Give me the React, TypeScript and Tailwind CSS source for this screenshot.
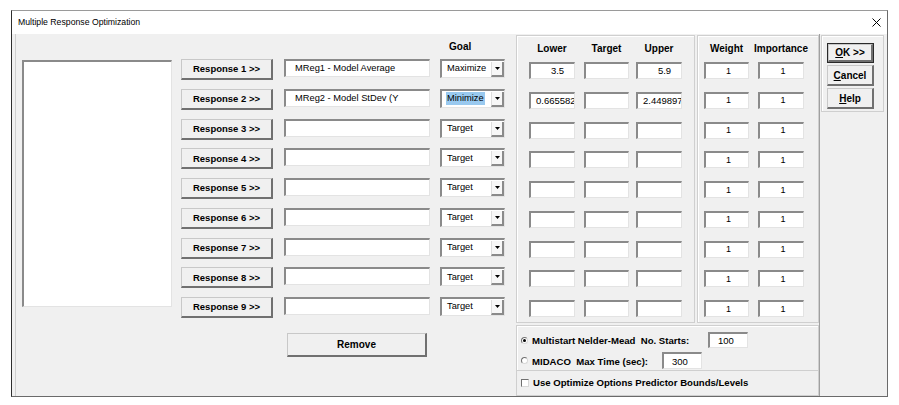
import React from "react";

type Row = { name: string; goal: string; lower: string; target: string; upper: string; selected?: boolean };

const rows: Row[] = [
  { name: "MReg1 - Model Average", goal: "Maximize", lower: "3.5", target: "", upper: "5.9" },
  { name: "MReg2 - Model StDev (Y", goal: "Minimize", lower: "0.665582", target: "", upper: "2.449897", selected: true },
  ...Array.from({ length: 7 }, () => ({ name: "", goal: "Target", lower: "", target: "", upper: "" })),
];

const sunken =
  "bg-white border-t-2 border-l-2 border-t-[#8a8a8a] border-l-[#8a8a8a] border-b border-r border-b-[#e3e3e3] border-r-[#e3e3e3] overflow-hidden whitespace-nowrap";

const raised =
  "flex items-center justify-center bg-[#f0f0f0] border-t border-l border-t-[#c8c8c8] border-l-[#c8c8c8] border-b-2 border-r-2 border-b-[#707070] border-r-[#707070] font-bold whitespace-nowrap";

function NumField({ value }: { value: string }) {
  const long = value.length > 5;
  return (
    <div className={sunken + " w-full h-[17px] flex items-center text-[9.5px] leading-none"}>
      {long ? (
        <span className="pl-[5px]">{value}</span>
      ) : (
        <span className="w-full text-center pl-[10px]">{value}</span>
      )}
    </div>
  );
}

function OneField() {
  return (
    <div className={sunken + " w-full h-[17px] flex items-center justify-center text-[9px] leading-none"}>
      <span className="pl-[3px]">1</span>
    </div>
  );
}

function Combo({ value, selected }: { value: string; selected?: boolean }) {
  return (
    <div className="flex w-[65px] h-[19px] bg-white border-t-2 border-l-2 border-t-[#8a8a8a] border-l-[#8a8a8a] border-b border-r border-b-[#e3e3e3] border-r-[#e3e3e3]">
      <div className="flex-1 flex items-center pl-[5px] text-[9.3px] leading-none">
        <span className={selected ? "bg-[#99c9ef] py-[2px] px-[1px] -ml-[1px]" : ""}>{value}</span>
      </div>
      <div className="w-[13px] mt-[1px] flex items-center justify-center bg-[#f7f7f7] border-l border-l-[#dcdcdc] border-r-2 border-b-2 border-r-[#8a8a8a] border-b-[#8a8a8a]">
        <svg width="5" height="3" viewBox="0 0 5 3">
          <path d="M0 0H5L2.5 3Z" fill="#000" />
        </svg>
      </div>
    </div>
  );
}

function Radio({ checked }: { checked?: boolean }) {
  return (
    <div className="w-[7px] h-[7px] rounded-full bg-white border border-t-[#707070] border-l-[#707070] border-b-[#d8d8d8] border-r-[#d8d8d8] flex items-center justify-center">
      {checked ? <div className="w-[3px] h-[3px] rounded-full bg-black" /> : null}
    </div>
  );
}

const groupBox = "border border-[#cfcfcf] shadow-[inset_1px_1px_0_#ffffff]";

export default function App() {
  return (
    <div className="w-[899px] h-[405px] bg-white pt-[10px] pl-[11px] font-['Liberation_Sans',Arial,sans-serif] text-black">
      <div className="w-[877px] h-[387px] flex flex-col border-l border-l-[#2e2e2e] border-t border-t-[#9a9a9a] border-r border-r-[#6a6a6a] border-b border-b-[#6a6a6a]">
        {/* Title bar */}
        <div className="h-[23px] shrink-0 bg-white flex items-center justify-between pl-[6px] pr-[6px]">
          <span className="text-[8.7px] leading-none">Multiple Response Optimization</span>
          <svg width="9" height="9" viewBox="0 0 9 9">
            <path d="M0.5 0.5L8.5 8.5M8.5 0.5L0.5 8.5" stroke="#000" strokeWidth="1" />
          </svg>
        </div>

        {/* Body */}
        <div className="flex-1 bg-[#f0f0f0] flex pl-[3px] overflow-hidden">
          <div className="w-[804px] border-l border-l-[#cfcfcf] flex">
            {/* Left part */}
            <div className="w-[500px] flex items-start">
              <div className="ml-[6px] mt-[26px] w-[150px] h-[247px] bg-white border-t-2 border-l-2 border-t-[#8a8a8a] border-l-[#8a8a8a] border-b border-r border-b-[#e3e3e3] border-r-[#e3e3e3]" />
              <div className="ml-[9px] flex flex-col">
                <div className="h-[25px] shrink-0 pl-[268px] pt-[7px] leading-[12px] text-[10px] font-bold">Goal</div>
                {rows.map((r, i) => (
                  <div key={i} className="h-[29.75px] shrink-0 flex items-start">
                    <div className={raised + " w-[92px] h-[21px] text-[9.5px] pt-[1px]"}>Response {i + 1} &gt;&gt;</div>
                    <div className={sunken + " ml-[11px] w-[146px] h-[18px] flex items-center pl-[9px] text-[9.3px] leading-none"}>
                      {r.name}
                    </div>
                    <div className="ml-[10px]">
                      <Combo value={r.goal} selected={r.selected} />
                    </div>
                  </div>
                ))}
                <div className={raised + " mt-[6px] ml-[106px] w-[140px] h-[24px] text-[10px]"}>Remove</div>
              </div>
            </div>

            {/* Right part */}
            <div className="w-[303px] flex flex-col pt-[1px]">
              <div className="flex h-[288px] shrink-0 gap-[2px]">
                <div className={groupBox + " w-[179px] flex pl-[12px] overflow-hidden"}>
                  {(["Lower", "Target", "Upper"] as const).map((h, ci) => (
                    <div
                      key={h}
                      className={
                        "flex flex-col items-center " +
                        (ci === 0 ? "w-[46px]" : ci === 1 ? "w-[45px] ml-[9px]" : "w-[46px] ml-[7px]")
                      }
                    >
                      <div className="h-[26px] shrink-0 pt-[7px] leading-[12px] text-[10px] font-bold">{h}</div>
                      {rows.map((r, i) => (
                        <div key={i} className="h-[29.75px] shrink-0 w-full">
                          <NumField value={ci === 0 ? r.lower : ci === 1 ? r.target : r.upper} />
                        </div>
                      ))}
                    </div>
                  ))}
                </div>
                <div className={groupBox + " w-[122px] flex pl-[6px] overflow-hidden"}>
                  {(["Weight", "Importance"] as const).map((h, ci) => (
                    <div key={h} className={"flex flex-col items-center " + (ci === 0 ? "w-[45px]" : "w-[46px] ml-[9px]")}>
                      <div className="h-[26px] shrink-0 pt-[7px] leading-[12px] text-[10px] font-bold whitespace-nowrap">{h}</div>
                      {rows.map((_, i) => (
                        <div key={i} className="h-[29.75px] shrink-0 w-full">
                          <OneField />
                        </div>
                      ))}
                    </div>
                  ))}
                </div>
              </div>

              <div className={groupBox + " mt-[2px] h-[46px] shrink-0 flex flex-col pl-[4px]"}>
                <div className="mt-[6px] h-[16px] flex items-center">
                  <Radio checked />
                  <span className="ml-[4px] w-[176px] whitespace-pre font-bold text-[9.6px] leading-none pt-[2px]">
                    Multistart Nelder-Mead  No. Starts:
                  </span>
                  <div className={sunken + " w-[40px] h-[16px] flex items-center pl-[8px] text-[9.5px] leading-none"}>100</div>
                </div>
                <div className="mt-[4px] h-[16px] flex items-center">
                  <Radio />
                  <span className="ml-[4px] w-[130px] whitespace-pre font-bold text-[9.6px] leading-none pt-[3px]">
                    MIDACO  Max Time (sec):
                  </span>
                  <div className={sunken + " w-[40px] h-[17px] flex items-center pl-[8px] pt-[2px] text-[9.5px] leading-none"}>300</div>
                </div>
              </div>
              <div className="h-[25px] shrink-0 border border-t-0 border-[#cfcfcf] flex items-center pl-[4px]">
                <div className="w-[8px] h-[8px] bg-white border border-t-[#707070] border-l-[#707070] border-b-[#d8d8d8] border-r-[#d8d8d8]" />
                <span className="ml-[4px] font-bold text-[9.6px] leading-none whitespace-nowrap">
                  Use Optimize Options Predictor Bounds/Levels
                </span>
              </div>
            </div>
          </div>

          {/* OK column */}
          <div className="flex-1 border-l border-l-[#a0a0a0] pl-[1px] pt-[1px]">
            <div className={groupBox + " w-[63px] h-[77px] flex flex-col pl-[5px] pt-[7px]"}>
              <div className="w-[47px] h-[20px] border border-[#2a2a2a] flex">
                <div className={raised + " flex-1 text-[10px]"}>
                  <span>
                    <span className="underline">O</span>K &gt;&gt;
                  </span>
                </div>
              </div>
              <div className={raised + " mt-[2px] w-[47px] h-[21px] text-[10px]"}>
                <span>
                  <span className="underline">C</span>ancel
                </span>
              </div>
              <div className={raised + " mt-[2px] w-[47px] h-[21px] text-[10px]"}>
                <span>
                  <span className="underline">H</span>elp
                </span>
              </div>
            </div>
          </div>
        </div>
      </div>
    </div>
  );
}
